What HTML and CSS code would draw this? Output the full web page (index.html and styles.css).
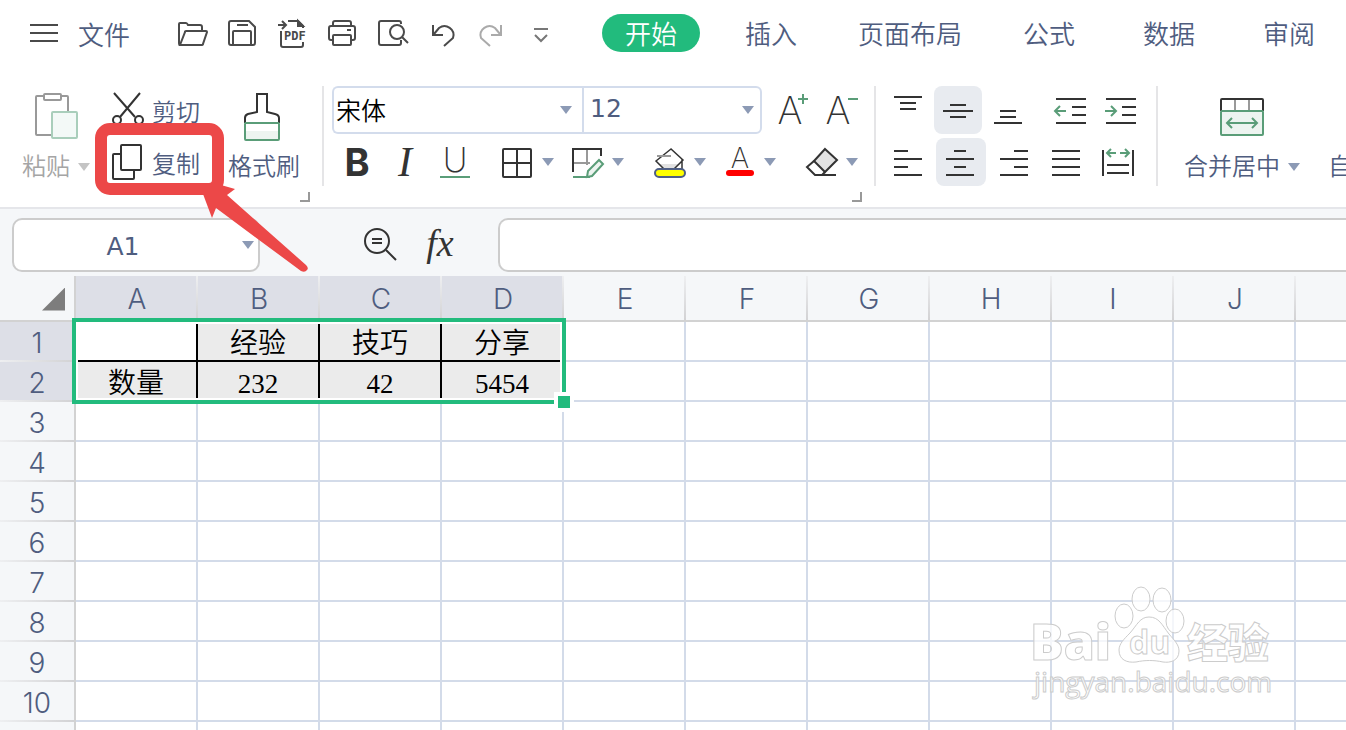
FILE: index.html
```html
<!DOCTYPE html>
<html lang="zh-CN">
<head>
  <meta charset="UTF-8">
  <meta name="viewport" content="width=device-width, initial-scale=1">
  <title>表格</title>
  <link rel="stylesheet" href="styles.css">
</head>
<body>
  <header class="menubar">
    <button class="file-menu">
      <svg width="28" height="20" viewBox="0 0 28 20"><path d="M0 2h28M0 10h28M0 18h28"/></svg>
      文件
    </button>
    <div class="quick">
      <button aria-label="打开"><svg width="32" height="32"><path d="M5 27H4q-1 0-1-2V6q0-1 1-1h6q1 0 2 2h12q2 0 2 2v4M10 13h20q1 0 1 1l-4 12q0 1-2 1H4l5-13q0-1 1-1z"/></svg></button>
      <button aria-label="保存"><svg width="32" height="32"><path d="M5 3h18l6 6v16q0 2-2 2H5q-2 0-2-2V5q0-2 2-2zM7 27V14q0-1 1-1h16q1 0 1 1v13M11 7h11"/></svg></button>
      <button aria-label="输出为PDF"><svg width="32" height="32"><path d="M2 7h7M6 3l4 4-4 4M12 3h10l5 5v2M5 13v14q0 2 2 2h18q2 0 2-2v-3"/><path class="solid" d="M22 3v5h5z"/><text class="pdf" x="8" y="22">PDF</text></svg></button>
      <button aria-label="打印"><svg width="32" height="32"><path d="M7 8V5q0-2 2-2h14q2 0 2 2v3M7 22H5q-2 0-2-2V10q0-2 2-2h22q2 0 2 2v10q0 2-2 2h-2M8 17h16q1 0 1 1v8q0 1-1 1H8q-1 0-1-1v-8q0-1 1-1zM21 12h4"/></svg></button>
      <button aria-label="打印预览"><svg width="32" height="32"><path d="M25 6V5q0-2-2-2H5q-2 0-2 2v20q0 2 2 2h18q2 0 2-2v-3M26 19l6 6"/><circle cx="21" cy="14" r="7"/></svg></button>
      <button aria-label="撤销"><svg width="32" height="32"><path d="M7 7v10h10M8 16l5-6A9 9 0 0 1 27 20L18 28"/></svg></button>
      <button class="off" aria-label="恢复"><svg width="32" height="32"><path d="M25 7v10H15M24 16l-5-6A9 9 0 0 0 5 20l9 8"/></svg></button>
      <button class="more" aria-label="更多"><svg width="32" height="32"><path d="M8 11h14M9 17l6 6 6-6"/></svg></button>
    </div>
    <nav class="tabs">
      <a href="#" class="tab active">开始</a>
      <a href="#" class="tab">插入</a>
      <a href="#" class="tab wide">页面布局</a>
      <a href="#" class="tab">公式</a>
      <a href="#" class="tab">数据</a>
      <a href="#" class="tab">审阅</a>
    </nav>
  </header>

  <section class="ribbon">
    <div class="group clipboard">
      <button class="big off">
        <span class="pic"><svg width="44" height="48"><path d="M10 3H3q-1 0-1 1v37q0 1 1 1h15M27 3h6q1 0 1 1v15"/><rect x="10" y="1" width="17" height="6" rx="1"/><rect class="paste-sheet" x="18" y="19" width="25" height="26" rx="1"/></svg></span>
        <span class="label">粘贴 <i class="caret"></i></span>
      </button>
      <div class="stack">
        <button class="item"><svg width="32" height="36"><path d="M2 1l21 24M28 1L8 25"/><circle cx="5" cy="28" r="4"/><circle cx="27" cy="28" r="4"/></svg>剪切</button>
        <button class="item"><svg width="32" height="36"><rect x="9" y="1" width="20" height="25" rx="1"/><path d="M9 10H2q-1 0-1 1v23q0 1 1 1h19q1 0 1-1v-8"/></svg>复制</button>
      </div>
      <button class="big">
        <span class="pic"><svg width="40" height="50"><path d="M1 31v-5q0-3 3-4l9-2V2h10v18l8 2q4 1 4 4v5"/><rect class="tint" x="2" y="39" width="32" height="8"/><rect class="green" x="1" y="31" width="34" height="17" rx="1"/></svg></span>
        <span class="label">格式刷</span>
      </button>
      <button class="launcher" aria-label="剪贴板设置"></button>
      <svg class="callout" width="216" height="154">
        <rect x="6" y="7" width="117" height="60" rx="9"/>
        <path d="M108 72l9 24 4-10 85 63q4 2 6-1 2-2-1-5L132 73l8-6-14-4z"/>
      </svg>
    </div>

    <div class="group font">
      <div class="row">
        <span class="combo family"><select aria-label="字体"><option>宋体</option></select></span>
        <span class="combo size"><select aria-label="字号"><option>12</option></select></span>
        <button class="tool" aria-label="增大字号"><svg width="48" height="48"><text class="letter" x="24" y="38">A</text><path class="green" d="M37 8v10M32 13h10"/></svg></button>
        <button class="tool" aria-label="减小字号"><svg width="48" height="48"><text class="letter" x="24" y="38">A</text><path class="green" d="M34 13h10"/></svg></button>
      </div>
      <div class="row format">
        <button class="tool bold" aria-label="加粗"><svg width="48" height="48"><text class="letter" x="25" y="38">B</text></svg></button>
        <button class="tool italic" aria-label="倾斜"><svg width="48" height="48"><text class="letter" x="24" y="38">I</text></svg></button>
        <button class="tool" aria-label="下划线"><svg width="48" height="48"><text class="letter u" x="25" y="34">U</text><path class="green" d="M10 39h30"/></svg></button>
        <button class="drop near" aria-label="边框"><svg width="32" height="32"><rect x="1" y="3" width="28" height="28" rx="1"/><path d="M15 3v28M1 17h28"/></svg><i class="caret"></i></button>
        <button class="drop far" aria-label="绘制边框"><svg width="32" height="32"><path class="grey" d="M15 4v15M2 17h16"/><path d="M1 26V3h28v7"/><path class="green" d="M1 31h17"/><path class="green tint" d="M15 31l1-6 11-11 4 4-11 12z"/></svg><i class="caret"></i></button>
        <button class="drop near" aria-label="填充颜色"><svg width="32" height="32"><path class="shade" d="M5 18h20l-5 5H10z"/><path class="thin" d="M17 3L2 15l8 8h10l9-9zM28 13v11"/><path class="grey" d="M3 10h14"/><rect class="fill-color" x="1" y="23" width="30" height="8" rx="4"/></svg><i class="caret"></i></button>
        <button class="drop far" aria-label="字体颜色"><svg width="32" height="32"><text class="letter small" x="16" y="22">A</text><rect class="font-color" x="2" y="24" width="28" height="6" rx="3"/></svg><i class="caret"></i></button>
        <button class="drop" aria-label="清除"><svg width="32" height="32"><path class="shade line" d="M19 3l12 11-12 12L8 15z"/><path d="M8 15l-7 6 8 8h7l3-3M9 29h21"/></svg><i class="caret"></i></button>
      </div>
      <button class="launcher" aria-label="字体设置"></button>
    </div>

    <div class="group align">
      <div class="row">
        <button class="tool" aria-label="顶端对齐"><svg width="32" height="32"><path d="M2 3h28M8 9h16M8 15h16"/></svg></button>
        <button class="tool on" aria-label="垂直居中"><svg width="32" height="32"><path d="M8 11h16M1 17h30M8 23h16"/></svg></button>
        <button class="tool" aria-label="底端对齐"><svg width="32" height="32"><path d="M8 17h16M8 23h16M2 29h28"/></svg></button>
        <button class="tool indent" aria-label="减少缩进量"><svg width="32" height="32"><path d="M2 5h30M18 13h14M18 21h14M2 29h30"/><path class="green" d="M12 17H1M6 12l-5 5 5 5"/></svg></button>
        <button class="tool" aria-label="增加缩进量"><svg width="32" height="32"><path d="M2 5h30M18 13h14M18 21h14M2 29h30"/><path class="green" d="M1 17h11M7 12l5 5-5 5"/></svg></button>
      </div>
      <div class="row horizontal">
        <button class="tool" aria-label="左对齐"><svg width="32" height="32"><path d="M1 5h14M1 13h28M1 21h14M1 29h28"/></svg></button>
        <button class="tool on" aria-label="水平居中"><svg width="32" height="32"><path d="M9 5h12M1 13h28M9 21h12M1 29h28"/></svg></button>
        <button class="tool" aria-label="右对齐"><svg width="32" height="32"><path d="M17 5h14M3 13h28M17 21h14M3 29h28"/></svg></button>
        <button class="tool" aria-label="两端对齐"><svg width="32" height="32"><path d="M3 5h28M3 13h28M3 21h28M3 29h28"/></svg></button>
        <button class="tool" aria-label="分散对齐"><svg width="32" height="32"><path d="M2 4v26M32 4v26M6 19h22M6 27h22"/><path class="green" d="M15 7H6M10 3L6 7l4 4M19 7h9M24 3l4 4-4 4"/></svg></button>
      </div>
    </div>

    <div class="group merge">
      <button class="big">
        <span class="pic"><svg width="44" height="38"><path class="grey" d="M15 2v10M29 2v10"/><path d="M1 13V2q0-1 1-1h40q1 0 1 1v11"/><rect class="green tint" x="1" y="13" width="42" height="24" rx="1"/><path class="green" d="M7 25h30M12 20l-5 5 5 5M32 20l5 5-5 5"/></svg></span>
        <span class="label">合并居中 <i class="caret"></i></span>
      </button>
      <button class="big">
        <span class="pic"></span>
        <span class="label">自动换行</span>
      </button>
    </div>
  </section>

  <section class="formula-bar">
    <span class="name-box"><input type="text" value="A1" aria-label="名称框"><i class="caret"></i></span>
    <button class="search" aria-label="浏览公式"><svg width="34" height="34"><circle cx="14" cy="13" r="12"/><path d="M23 22l10 10M9 11h10M9 15h10"/></svg></button>
    <button class="fx" aria-label="插入函数">fx</button>
    <input class="formula" type="text" aria-label="编辑栏">
  </section>

  <main class="sheet">
    <table>
      <thead>
        <tr>
          <th class="corner"><button aria-label="全选"></button></th>
          <th class="sel">A</th><th class="sel">B</th><th class="sel">C</th><th class="sel">D</th>
          <th>E</th><th>F</th><th>G</th><th>H</th><th>I</th><th>J</th><th></th>
        </tr>
      </thead>
      <tbody>
        <tr><th class="sel">1</th><td class="box"></td><td class="box on">经验</td><td class="box on">技巧</td><td class="box on">分享</td><td></td><td></td><td></td><td></td><td></td><td></td><td></td></tr>
        <tr><th class="sel">2</th><td class="box on">数量</td><td class="box on num">232</td><td class="box on num">42</td><td class="box on num">5454</td><td></td><td></td><td></td><td></td><td></td><td></td><td></td></tr>
        <tr><th>3</th><td></td><td></td><td></td><td></td><td></td><td></td><td></td><td></td><td></td><td></td><td></td></tr>
        <tr><th>4</th><td></td><td></td><td></td><td></td><td></td><td></td><td></td><td></td><td></td><td></td><td></td></tr>
        <tr><th>5</th><td></td><td></td><td></td><td></td><td></td><td></td><td></td><td></td><td></td><td></td><td></td></tr>
        <tr><th>6</th><td></td><td></td><td></td><td></td><td></td><td></td><td></td><td></td><td></td><td></td><td></td></tr>
        <tr><th>7</th><td></td><td></td><td></td><td></td><td></td><td></td><td></td><td></td><td></td><td></td><td></td></tr>
        <tr><th>8</th><td></td><td></td><td></td><td></td><td></td><td></td><td></td><td></td><td></td><td></td><td></td></tr>
        <tr><th>9</th><td></td><td></td><td></td><td></td><td></td><td></td><td></td><td></td><td></td><td></td><td></td></tr>
        <tr><th>10</th><td></td><td></td><td></td><td></td><td></td><td></td><td></td><td></td><td></td><td></td><td></td></tr>
        <tr><th></th><td></td><td></td><td></td><td></td><td></td><td></td><td></td><td></td><td></td><td></td><td></td></tr>
      </tbody>
    </table>
    <div class="selection"></div>
    <svg class="watermark" width="250" height="130">
      <ellipse cx="94" cy="36" rx="9" ry="12"/>
      <ellipse cx="111" cy="19" rx="9" ry="12"/>
      <ellipse cx="132" cy="20" rx="9" ry="12"/>
      <ellipse cx="145" cy="41" rx="9" ry="12"/>
      <path d="M119 37c10 0 13 8 20 17 6 7 10 11 10 17 0 10-9 12-16 11-9-2-18-2-27 0-9 1-17-2-17-12 0-6 5-11 11-17 7-8 10-16 19-16z"/>
      <text class="bai" x="0" y="80">Bai</text>
      <text class="du" x="99" y="74">du</text>
      <text class="jy" x="157" y="78">经验</text>
      <text class="url" x="4" y="112">jingyan.baidu.com</text>
    </svg>
  </main>
</body>
</html>
```
FILE: styles.css
```css
*, *::after {
  box-sizing: border-box;
}
body {
  margin: 0;
  height: 100vh;
  overflow: hidden;
  display: flex;
  flex-direction: column;
  background: #fff;
  color: #4f5d7f;
  font-family: Inter, "Noto Sans CJK SC", sans-serif;
  font-weight: 350;
}
button {
  padding: 0;
  border: none;
  background: none;
  color: inherit;
  font: inherit;
  white-space: nowrap;
  flex: none;
  cursor: pointer;
}
svg {
  display: block;
  flex: none;
  overflow: visible;
  fill: none;
  stroke: #333;
  stroke-width: 2;
}
.caret {
  width: 12px;
  height: 8px;
  flex: none;
  background: #8c9ab5;
  clip-path: polygon(0 0, 100% 0, 50% 100%);
}
.green { stroke: #5a9d78; }
.grey { stroke: #999; }
.tint { fill: #edf4f0; }
.shade { fill: #e2e2e2; stroke: none; }
.shade.line { stroke: #333; }
.thin { stroke-width: 1.5; }
rect.tint:not(.green) { stroke: none; }

/* menu bar */
.menubar {
  display: flex;
  align-items: center;
  flex: none;
  height: 68px;
  font-size: 26px;
}
.menubar svg {
  stroke: #4a4a4a;
}
.file-menu {
  display: flex;
  align-items: center;
  gap: 20px;
  margin-left: 30px;
  padding-bottom: 2px;
}
.quick {
  display: flex;
  margin-left: 37px;
}
.quick button {
  display: flex;
  justify-content: center;
  width: 50px;
}
.quick .off svg { stroke: #aaa; }
.quick .more svg { stroke: #777; }
.solid { fill: #4a4a4a; }
.pdf {
  fill: #4a4a4a;
  stroke: none;
  font: bold 12px "DejaVu Sans Mono", monospace;
}
.tabs {
  display: flex;
  gap: 22px;
  margin-left: 35px;
  margin-bottom: 2px;
}
.tab {
  width: 98px;
  flex: none;
  height: 38px;
  line-height: 41px;
  border-radius: 19px;
  text-align: center;
  color: inherit;
  text-decoration: none;
}
.tab.wide { width: 136px; }
.tab.active {
  background: #22bb7d;
  color: #fff;
}

/* ribbon */
.ribbon {
  display: flex;
  flex: none;
  padding: 18px 0 21px;
  border-bottom: 2px solid #e5e6ea;
  font-size: 24px;
}
.group {
  position: relative;
  flex: none;
  height: 100px;
  border-right: 2px solid #e5e5e7;
}
.launcher {
  position: absolute;
  right: 12px;
  bottom: -16px;
  width: 10px;
  height: 10px;
  border-right: 2px solid #999;
  border-bottom: 2px solid #999;
}
.big {
  display: flex;
  flex-direction: column;
  align-items: center;
}
.pic {
  display: flex;
  align-items: center;
  height: 64px;
}
.label {
  display: flex;
  align-items: center;
  gap: 8px;
  line-height: 38px;
}
.big.off { color: #a5a5a5; }
.big.off svg { stroke: #999; }
.big.off .caret { background: #c4c4c4; }
.big.off rect { fill: #fff; }
.big.off .paste-sheet {
  fill: #f3f9f7;
  stroke: #a9cebb;
}
.clipboard {
  display: flex;
  padding: 0 22px;
}
.stack {
  display: flex;
  flex-direction: column;
  gap: 4px;
  margin: 0 28px 0 22px;
}
.item {
  display: flex;
  align-items: center;
  gap: 8px;
  height: 48px;
}
.callout {
  position: absolute;
  left: 95px;
  top: 36px;
  z-index: 2;
  pointer-events: none;
}
.callout rect {
  stroke: #ec4848;
  stroke-width: 12;
}
.callout path {
  fill: #ec4848;
  stroke: none;
}
.row {
  display: flex;
  height: 48px;
  margin-bottom: 4px;
}
.tool {
  display: flex;
  align-items: center;
  justify-content: center;
  width: 48px;
  height: 48px;
  border-radius: 8px;
}
.tool.on { background: #e8ebf0; }
.font { padding: 0 12px 0 8px; }
.combo {
  position: relative;
  height: 48px;
  border: 2px solid #d3dcec;
}
.combo::after {
  content: "";
  position: absolute;
  right: 6px;
  top: 18px;
  width: 12px;
  height: 8px;
  background: #8c9ab5;
  clip-path: polygon(0 0, 100% 0, 50% 100%);
  pointer-events: none;
}
.combo.family::after { right: 10px; }
.combo select {
  appearance: none;
  width: 100%;
  height: 44px;
  padding: 2px 2px 0;
  border: none;
  background: none;
  color: #000;
  font: inherit;
  font-size: 25px;
}
.family {
  width: 250px;
  border-right: none;
  border-radius: 6px 0 0 6px;
}
.size {
  width: 180px;
  margin-right: 4px;
  border-radius: 0 6px 6px 0;
}
.combo.size select {
  padding: 0 6px 4px;
  color: #4f5d7f;
  font: 25px "DejaVu Sans", sans-serif;
}
.letter {
  fill: #333;
  stroke: none;
  text-anchor: middle;
  font-size: 38px;
  font-weight: 200;
}
.letter.u { font-size: 34px; }
.letter.small { font-size: 28px; }
.bold .letter { font-weight: 700; }
.italic .letter {
  font-family: "Liberation Serif", serif;
  font-style: italic;
  font-size: 42px;
}
.format .tool { margin-right: 1px; }
.drop {
  display: flex;
  align-items: center;
  gap: 8px;
}
.tool + .drop { margin-left: 23px; }
.near { margin-right: 18px; }
.far { margin-right: 30px; }
.fill-color {
  fill: #ff0;
  stroke: #4f5f85;
}
.font-color {
  fill: #f00;
  stroke: none;
}
.align { padding: 0 12px 0 8px; }
.align .row { gap: 2px; }
.align .indent { margin-left: 12px; }
.horizontal .tool { width: 50px; }
.merge {
  display: flex;
  gap: 28px;
  padding-left: 26px;
  border-right: none;
}

/* formula bar */
.formula-bar {
  display: flex;
  flex: none;
  padding: 9px 0 4px 12px;
  background: #f5f7f9;
}
.name-box {
  display: flex;
  align-items: center;
  flex: none;
  width: 248px;
  height: 54px;
  padding-right: 4px;
  border: 2px solid #ccc;
  border-radius: 10px;
  background: #fff;
}
.name-box input {
  flex: 1;
  min-width: 0;
  padding: 2px 10px 0 0;
  border: none;
  background: none;
  text-align: center;
  color: inherit;
  font: 25px "DejaVu Sans", sans-serif;
}
.search, .fx {
  display: flex;
  align-items: center;
  justify-content: center;
  width: 60px;
}
.search { margin-left: 90px; }
.fx {
  margin-right: 28px;
  padding-bottom: 4px;
  color: #333;
  font: italic 38px "Liberation Serif", serif;
}
.formula {
  flex: 1;
  min-width: 0;
  height: 54px;
  padding: 0 12px;
  border: 2px solid #ccc;
  border-right: none;
  border-radius: 10px 0 0 10px;
  background: #fff;
  font: inherit;
  font-size: 24px;
}

/* sheet */
.sheet {
  position: relative;
  flex: 1;
  min-height: 0;
  overflow: hidden;
}
table {
  width: 1418px;
  table-layout: fixed;
  border-collapse: separate;
  border-spacing: 0;
}
th, td {
  height: 40px;
  padding: 2px 0 0;
  line-height: 36px;
  text-align: center;
  overflow: hidden;
  white-space: nowrap;
}
th {
  width: 122px;
  font-size: 28px;
  font-weight: 300;
  background: linear-gradient(to right, #eeeff1, #d2d2d4) bottom / 100% 2px no-repeat #f5f7f9;
}
tbody th, .corner {
  border-right: 2px solid #d2d2d2;
}
thead th {
  height: 46px;
  border-bottom: 2px solid #d2d2d2;
  background: linear-gradient(#eeeff1, #d2d2d4) right / 2px 100% no-repeat #f5f7f9;
}
thead .corner {
  width: 76px;
  background: #f5f7f9;
}
th.sel { background-color: #dddfe7; }
.corner button {
  display: block;
  width: 23px;
  height: 23px;
  margin-left: 42px;
  background: #7d7d7d;
  clip-path: polygon(100% 0, 100% 100%, 0 100%);
}
td {
  padding-top: 6px;
  line-height: 32px;
  border-right: 2px solid #d3dbe9;
  border-bottom: 2px solid #d3dbe9;
  color: #000;
  font-family: "Liberation Serif", "Noto Sans CJK SC", serif;
  font-size: 28px;
}
td.box { border-color: #000; }
td.on { background: #ebebeb; }
td.num { font-size: 27px; }
.selection {
  position: absolute;
  left: 72px;
  top: 42px;
  width: 494px;
  height: 86px;
  border: 4px solid #22bb7d;
  box-shadow: inset 0 0 0 2px #fff;
}
.selection::after {
  content: "";
  position: absolute;
  right: -12px;
  bottom: -12px;
  width: 20px;
  height: 20px;
  border: 4px solid #fff;
  background: #22bb7d;
}
.watermark {
  position: absolute;
  right: 66px;
  bottom: 20px;
  fill: rgba(255, 255, 255, 0.75);
  stroke: #ccc;
  stroke-width: 1;
  pointer-events: none;
}
.bai, .du {
  font: 800 50px "Open Sans", sans-serif;
}
.du {
  font-size: 32px;
  font-weight: 700;
}
.jy {
  font: 900 41px "Noto Sans CJK SC", sans-serif;
}
.url {
  font: 500 28px "Open Sans", sans-serif;
}
```
